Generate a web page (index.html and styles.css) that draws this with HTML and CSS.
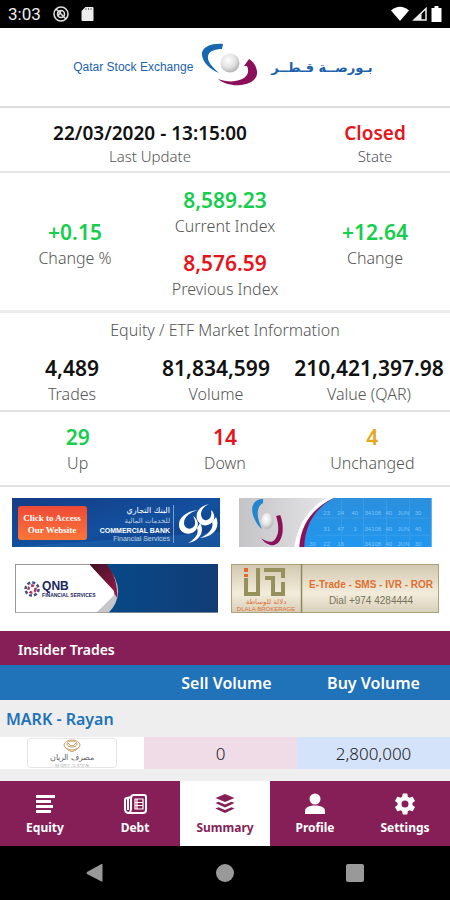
FILE: index.html
```html
<!DOCTYPE html>
<html lang="en">
<head>
    <meta charset="UTF-8">
    <meta name="viewport" content="width=device-width, initial-scale=1.0">
    <title>Qatar Stock Exchange</title>
    <link rel="stylesheet" href="styles.css">
</head>
<body>

<div class="status-bar">
    <span>3:03</span>
    <svg width="16" height="16" viewBox="0 0 16 16" fill="none" stroke="#ddd" stroke-width="1.6">
        <circle cx="8" cy="8" r="7"/>
        <circle cx="8" cy="8" r="3.5"/>
        <path d="M3 3l10 10M5 10l3-5"/>
    </svg>
    <svg width="13" height="16" viewBox="0 0 13 16">
        <path d="M4.500 1H11.500Q12.500 1 12.500 2V14Q12.500 15 11.500 15H1.500Q.5 15 .5 14V5z" fill="#eee"/>
        <path d="M5 2v2M7.500 2v2M10 2v2" stroke="#777"/>
    </svg>
    <div class="status-right">
        <svg width="18" height="16" viewBox="0 0 18 16"><path d="M0 4.500Q9-3 18 4.500L9 15z" fill="#fff"/></svg>
        <svg width="16" height="16" viewBox="0 0 16 16"><path d="M14 2.500V14H2z" fill="none" stroke="#eee" stroke-width="1.500"/><path d="M9.500 7V14H2z" fill="#eee"/></svg>
        <svg width="11" height="16" viewBox="0 0 11 16"><path d="M3.500 0h4v2H10.500V16H.5V2h3z" fill="#fff"/></svg>
    </div>
</div>

<header class="header">
    <span class="brand">Qatar Stock Exchange</span>
    <svg class="logo" width="58" height="44" viewBox="0 0 58 44">
        <defs>
            <radialGradient id="ball" cx="40%" cy="35%" r="65%">
                <stop offset="0" stop-color="#fff"/>
                <stop offset="0.6" stop-color="#e2e2e2"/>
                <stop offset="1" stop-color="#b5b5b5"/>
            </radialGradient>
        </defs>
        <path d="M22 1C9 0 0 5 1 12c1 8 8 14 17 18C11 24 6 18 7 13c1-5 7-7 14-7z" fill="#1767b1"/>
        <path d="M48 16l-5 7h3c4 9-3 14-12 15-5 1-11 0-17-2 6 5 15 7 23 6 11-1 17-7 16-14-1-5-3-9-8-12z" fill="#8b1059"/>
        <circle cx="29" cy="20" r="9.500" fill="url(#ball)"/>
    </svg>
    <span class="brand-ar" lang="ar" dir="rtl">بـورصــة قـطــر</span>
</header>

<main class="content">
    <section class="update">
        <div class="stat small">
            <strong>22/03/2020 - 13:15:00</strong>
            <span>Last Update</span>
        </div>
        <div class="stat small">
            <strong class="red">Closed</strong>
            <span>State</span>
        </div>
    </section>

    <section class="index">
        <div class="stat">
            <strong class="green">+0.15</strong>
            <span>Change %</span>
        </div>
        <div class="index-values">
            <div class="stat">
                <strong class="green">8,589.23</strong>
                <span>Current Index</span>
            </div>
            <div class="stat">
                <strong class="red">8,576.59</strong>
                <span>Previous Index</span>
            </div>
        </div>
        <div class="stat">
            <strong class="green">+12.64</strong>
            <span>Change</span>
        </div>
    </section>

    <section class="market">
        <h2>Equity / ETF Market Information</h2>
        <div class="market-row">
            <div class="stat">
                <strong>4,489</strong>
                <span>Trades</span>
            </div>
            <div class="stat">
                <strong>81,834,599</strong>
                <span>Volume</span>
            </div>
            <div class="stat">
                <strong>210,421,397.98</strong>
                <span>Value (QAR)</span>
            </div>
        </div>
    </section>

    <section class="counts">
        <div class="stat">
            <strong class="green">29</strong>
            <span>Up</span>
        </div>
        <div class="stat">
            <strong class="red">14</strong>
            <span>Down</span>
        </div>
        <div class="stat">
            <strong class="yellow">4</strong>
            <span>Unchanged</span>
        </div>
    </section>

    <section class="banners">
        <!-- Commercial Bank -->
        <a href="#" class="banner wide">
            <svg viewBox="0 0 208 49">
                <defs>
                    <linearGradient id="cb" x2="1" y2="1">
                        <stop offset="0" stop-color="#153c85"/>
                        <stop offset="0.55" stop-color="#12509f"/>
                        <stop offset="1" stop-color="#103a80"/>
                    </linearGradient>
                    <linearGradient id="cta" x2="0" y2="1">
                        <stop offset="0" stop-color="#ee4937"/>
                        <stop offset="1" stop-color="#fb7639"/>
                    </linearGradient>
                </defs>
                <rect width="208" height="49" fill="url(#cb)"/>
                <path d="M0 49L208 34v15z" fill="#2272bd" opacity="0.4"/>
                <rect x="6" y="8" width="69" height="34" rx="3" fill="url(#cta)"/>
                <g class="cta-text" fill="#fff" font-size="9" font-weight="bold" text-anchor="middle">
                    <text x="40" y="23">Click to Access</text>
                    <text x="40" y="35">Our Website</text>
                </g>
                <g fill="#fff" text-anchor="end">
                    <text class="arabic" x="158" y="15" font-size="8">البنك التجاري</text>
                    <text class="arabic" x="158" y="25" font-size="7" opacity="0.7">للخدمات المالية</text>
                    <text x="158" y="35" font-size="7" font-weight="bold">COMMERCIAL BANK</text>
                    <text x="158" y="43" font-size="7" opacity="0.7">Financial Services</text>
                </g>
                <path d="M161.500 7v38" stroke="#7d9fd0"/>
                <path d="M186 12C174 13 166 20 167 28C168 36 178 38 183 33C188 28 186 21 181 18C184 23 184 28 180 30C176 32 172 29 172 25C172 19 178 14 186 12z" fill="#fff"/>
                <path d="M197 6C188 8 183 14 185 21C187 27 193 29 198 26C204 22 203 15 199 12C200 17 199 21 195 22C192 23 189 20 189 16C189 12 192 8 197 6z" fill="#fff"/>
                <path d="M204 19C209 31 200 39 188 40C197 36 202 30 200 24zM188 25C193 33 188 43 176 45C184 41 187 35 185 30z" fill="#fff"/>
            </svg>
        </a>
        <!-- Exchange -->
        <a href="#" class="banner narrow" aria-label="Qatar Stock Exchange">
            <svg viewBox="0 0 192 49">
                <defs>
                    <linearGradient id="sky" x2="0" y2="1">
                        <stop offset="0" stop-color="#2b8fdd"/>
                        <stop offset="1" stop-color="#2197ee"/>
                    </linearGradient>
                    <linearGradient id="silver">
                        <stop offset="0" stop-color="#c4c4c6"/>
                        <stop offset="1" stop-color="#e4e4e6"/>
                    </linearGradient>
                </defs>
                <rect width="192" height="49" fill="url(#sky)"/>
                <path d="M76 20H192M76 37H192M102 0v49M124 0v49M147 0v49M170 0v49" stroke="#4aa8ef" opacity="0.5"/>
                <g fill="#7cc3f7" font-size="6">
                    <text x="84" y="17">23</text><text x="98" y="17">24</text><text x="112" y="17">40</text><text x="125" y="17">34108</text><text x="146" y="17">40</text><text x="158" y="17">JUN</text><text x="175" y="17">30</text>
                    <text x="84" y="33">31</text><text x="98" y="33">47</text><text x="114" y="33">1</text><text x="125" y="33">34108</text><text x="146" y="33">40</text><text x="158" y="33">JUN</text><text x="175" y="33">40</text>
                    <text x="70" y="48">30</text><text x="84" y="48">22</text><text x="98" y="48">16</text><text x="125" y="48">34108</text><text x="146" y="48">40</text><text x="158" y="48">JUN</text><text x="175" y="48">30</text>
                </g>
                <path d="M0 0H94Q66 16 65 49H0z" fill="#8b1059"/>
                <path d="M0 0H94Q62 16 60 49H0z" fill="#fff"/>
                <path d="M0 0H87Q60 16 55 49H0z" fill="url(#silver)"/>
                <path d="M24 1C13 1 11 11 15 20c2 5 5 9 8 11-5-10-7-22 1-26z" fill="#2385cf"/>
                <path d="M37 18l4-1c5 12 3 29-7 30-5 0-9-3-12-7 6 4 11 5 14 1 4-5 4-13 1-23z" fill="#8b1059"/>
                <ellipse cx="28" cy="23" rx="6" ry="8" fill="url(#ball)"/>
            </svg>
        </a>
        <!-- QNB -->
        <a href="#" class="banner mid">
            <svg viewBox="0 0 203 49">
                <defs>
                    <linearGradient id="qnb">
                        <stop offset="0.4" stop-color="#064a89"/>
                        <stop offset="1" stop-color="#123c75"/>
                    </linearGradient>
                    <linearGradient id="wine" x2="1" y2="1">
                        <stop offset="0" stop-color="#3c0f22"/>
                        <stop offset="1" stop-color="#9d1b48"/>
                    </linearGradient>
                </defs>
                <rect width="203" height="49" fill="url(#qnb)"/>
                <path d="M0 0H90Q114 27 93 49H0z" fill="#c6c6cb"/>
                <path d="M74 0H91Q102 12 102 34L97 27z" fill="url(#wine)"/>
                <path d="M.5 .5H74L97 25Q101 29 97 33L81 48.500H.5z" fill="#fff"/>
                <path d="M.5 48.500V.5H74M.5 48.500H203" fill="none" stroke="#999"/>
                <g fill="none" stroke-width="2.500" stroke-dasharray="3 2">
                    <circle cx="17" cy="25" r="6.500" stroke="#44528a"/>
                    <circle cx="17" cy="25" r="3.500" stroke="#b52f59"/>
                </g>
                <text x="27" y="26" font-size="12" font-weight="bold" fill="#20275c">QNB</text>
                <text x="27" y="33" font-size="5" font-weight="bold" fill="#20275c">FINANCIAL SERVICES</text>
            </svg>
        </a>
        <!-- Dlala -->
        <a href="#" class="banner wide">
            <svg viewBox="0 0 208 49">
                <defs>
                    <linearGradient id="sand" x2="0" y2="1">
                        <stop offset="0" stop-color="#d2c8b0"/>
                        <stop offset="0.6" stop-color="#f3ecdb"/>
                        <stop offset="1" stop-color="#d8cfb9"/>
                    </linearGradient>
                </defs>
                <rect x="0.5" y="0.5" width="207" height="48" fill="url(#sand)" stroke="#aaa27d"/>
                <path d="M70.500 0v49" stroke="#8c8a5c" stroke-width="1.500"/>
                <path d="M15 14V30H27V4M33 6H52V14M34 14H42V30H52V18" fill="none" stroke="#96915a" stroke-width="4"/>
                <path d="M13 4h4v4h-4zM13 10h4v3h-4z" fill="#e06c28"/>
                <text class="arabic" x="35" y="40" font-size="7" fill="#dc7135" text-anchor="middle">دلالة للوساطة</text>
                <text x="35" y="47" font-size="6" fill="#dc7135" text-anchor="middle">DLALA BROKERAGE</text>
                <text x="140" y="24" font-size="10" font-weight="bold" fill="#dd7030" text-anchor="middle">E-Trade - SMS - IVR - ROR</text>
                <text x="140" y="40" font-size="10" fill="#77735a" text-anchor="middle">Dial +974 4284444</text>
            </svg>
        </a>
    </section>

    <section class="insider">
        <h3>Insider Trades</h3>
        <table>
            <thead>
                <tr>
                    <th class="col-name"></th>
                    <th class="col-sell">Sell Volume</th>
                    <th>Buy Volume</th>
                </tr>
            </thead>
            <tbody>
                <tr>
                    <th class="company" colspan="3">MARK - Rayan</th>
                </tr>
                <tr>
                    <td class="company-logo">
                        <svg width="90" height="30" viewBox="0 0 90 30">
                            <rect x="0.5" y="0.5" width="89" height="29" rx="3" fill="#fff" stroke="#e5e5e5"/>
                            <g fill="none" stroke="#c9a069">
                                <ellipse cx="45" cy="7" rx="8" ry="5"/>
                                <ellipse cx="45" cy="6" rx="5" ry="3"/>
                                <path d="M38 9q7 9 14 0M41 5q4 6 8 0"/>
                            </g>
                            <text class="arabic" x="45" y="22" font-size="8" fill="#666" text-anchor="middle">مصرف الريان</text>
                            <text x="45" y="29" font-size="4" fill="#777" text-anchor="middle">MASRAF AL RAYAN</text>
                        </svg>
                    </td>
                    <td class="sell">0</td>
                    <td class="buy">2,800,000</td>
                </tr>
            </tbody>
        </table>
    </section>
</main>

<nav class="tabs">
    <a href="#">
        <svg width="24" height="24" viewBox="0 0 24 24"><path d="M3 4.500H22M3 9.500H18M3 14.500H20M3 19.500H18" stroke="#fff" stroke-width="2.800"/></svg>
        Equity
    </a>
    <a href="#">
        <svg width="24" height="24" viewBox="0 0 24 24" fill="none" stroke="#fff">
            <path d="M8 5L4 6Q2 6 2 8V17Q2 21 6 21H20Q23 21 23 18V5Q23 3 21 3H11Q8 3 8 6V17Q8 20 6 21M5 6V18" stroke-width="2"/>
            <path d="M12 7H20V17H12zM12 10.500H20M12 13.500H20M14 7V17" stroke-width="1.200"/>
        </svg>
        Debt
    </a>
    <a href="#" class="active">
        <svg width="24" height="24" viewBox="0 0 24 24" fill="#861f57">
            <path d="M12 2L21.500 6L12 10L2.500 6z"/>
            <path d="M2.500 11L5.500 9.800L12 12.500L18.500 9.800L21.500 11L12 15.500z"/>
            <path d="M2.500 16.500L5.500 15.300L12 18L18.500 15.300L21.500 16.500L12 21z"/>
        </svg>
        Summary
    </a>
    <a href="#">
        <svg width="24" height="24" viewBox="0 0 24 24" fill="#fff">
            <circle cx="12" cy="7" r="5.500"/>
            <path d="M2 22V19C2 15 7 13.500 12 13.500S22 15 22 19V22z"/>
        </svg>
        Profile
    </a>
    <a href="#">
        <svg width="24" height="24" viewBox="0 0 24 24" fill="#fff">
            <path fill-rule="evenodd" d="M19.400 13c.1-.7.100-1.300 0-2l2.300-1.800c.2-.2.300-.5.100-.7l-2-3.500c-.1-.2-.4-.3-.7-.2l-2.600 1c-.5-.4-1.100-.8-1.700-1L14.400 2c0-.3-.2-.5-.5-.5h-3.800c-.3 0-.5.200-.5.500l-.4 2.800c-.6.200-1.200.6-1.700 1l-2.600-1c-.3-.1-.6 0-.7.200l-2 3.500c-.2.200-.1.500.1.700L4.600 11c-.1.700-.1 1.300 0 2l-2.300 1.800c-.2.200-.3.500-.1.700l2 3.500c.1.200.4.300.7.200l2.600-1c.5.400 1.100.8 1.700 1l.4 2.800c0 .3.200.5.500.5h3.800c.3 0 .5-.2.500-.5l.4-2.800c.6-.2 1.200-.6 1.700-1l2.600 1c.3.100.6 0 .7-.2l2-3.500c.2-.2.100-.5-.1-.7zM12 15.500a3.500 3.500 0 1 1 0-7a3.500 3.500 0 0 1 0 7z"/>
        </svg>
        Settings
    </a>
</nav>

<div class="system-bar">
    <button aria-label="Back"><svg width="20" height="20" viewBox="0 0 20 20"><path d="M17.500 2V18Q17.500 19 16.500 18.500L2 11Q1 10 2 9L16.500 1Q17.500 .5 17.500 2z"/></svg></button>
    <button aria-label="Home"><svg width="20" height="20" viewBox="0 0 20 20"><circle cx="10" cy="10" r="9"/></svg></button>
    <button aria-label="Recent apps"><svg width="20" height="20" viewBox="0 0 20 20"><rect x="1" y="1" width="18" height="18" rx="2"/></svg></button>
</div>

</body>
</html>
```
FILE: styles.css
```css
* {
    box-sizing: border-box;
}
body {
    font-family: "Noto Sans", "Open Sans", sans-serif;
    margin: 0;
    height: 100vh;
    display: flex;
    flex-direction: column;
    background-color: #efefef;
}
svg {
    display: block;
}
h2, h3 {
    margin: 0;
}
.status-bar {
    display: flex;
    align-items: center;
    gap: 12px;
    height: 28px;
    padding: 0 8px;
    background: #000;
    color: #eee;
    font: 17px Roboto, sans-serif;
}
.status-right {
    display: flex;
    gap: 3px;
    margin-left: auto;
}
.header {
    display: flex;
    align-items: center;
    justify-content: center;
    height: 80px;
    padding-right: 4px;
    background: #fff;
    border-bottom: 2px solid #dcdcdc;
    color: #1c62ad;
}
.logo {
    margin: 0 12px 4px 8px;
}
.brand {
    font: 12px "Liberation Sans", sans-serif;
}
.brand-ar {
    font: bold 13px "DejaVu Sans", sans-serif;
}
.content {
    flex: 1;
    min-height: 0;
    overflow: hidden;
}
.content section {
    background: #fff;
}
.stat {
    display: flex;
    flex-direction: column;
    align-items: center;
    line-height: 26px;
}
.stat strong {
    font-size: 21px;
    font-weight: 600;
    color: #111;
}
.stat span,
.market h2 {
    font-size: 16px;
    font-weight: 300;
    color: #555;
}
.stat.small {
    line-height: 23px;
}
.stat.small strong {
    font-size: 19px;
}
.stat.small span {
    font-size: 15px;
}
.stat .green {
    color: #16cd4c;
}
.stat .red {
    color: #e5151c;
}
.stat .yellow {
    color: #e3a81c;
}
.update {
    display: grid;
    grid-template-columns: 2fr 1fr;
    padding: 14px 0 3px;
    border-bottom: 2px solid #e6e6e6;
}
.index {
    display: grid;
    grid-template-columns: 1fr 1fr 1fr;
    align-items: center;
    padding: 14px 0 8px;
    border-bottom: 3px solid #ececec;
}
.index-values {
    display: grid;
    gap: 11px;
}
.market {
    padding: 4px 0 3px;
    border-bottom: 2px solid #e2e2e2;
}
.market h2 {
    text-align: center;
    line-height: 26px;
    margin-bottom: 12px;
}
.market-row {
    display: grid;
    grid-template-columns: 8fr 8fr 9fr;
}
.counts {
    display: grid;
    grid-template-columns: 1fr 1fr 1fr;
    padding: 12px 4px 9px;
    border-bottom: 2px solid #e2e2e2;
}
.banners {
    display: grid;
    grid-template-columns: 1fr 1fr;
    justify-items: center;
    gap: 17px 0;
    padding: 11px 5px 18px 7px;
}
.banner {
    font-family: "Liberation Sans", sans-serif;
}
.banner.wide {
    width: 95%;
}
.banner.mid {
    width: 93%;
}
.banner.narrow {
    width: 88%;
}
.banner svg {
    width: 100%;
}
.arabic {
    font-family: "DejaVu Sans", sans-serif;
}
.cta-text {
    font-family: "Liberation Serif", serif;
}
.insider h3 {
    padding: 4px 18px 0;
    height: 34px;
    line-height: 30px;
    background: #861f57;
    color: #fff;
    font-size: 14px;
    font-weight: 600;
}
.insider table {
    width: 100%;
    border-collapse: collapse;
    table-layout: fixed;
}
.insider th,
.insider td {
    padding: 0;
    text-align: center;
    font-size: 16px;
}
.insider thead th {
    height: 35px;
    background: #2072b9;
    color: #fff;
    font-weight: 600;
}
.insider .col-name {
    width: 32%;
}
.insider .col-sell {
    width: 34%;
    padding-left: 12px;
}
.insider .company {
    height: 37px;
    padding-left: 6px;
    background: #eee;
    color: #2072b9;
    font-weight: 600;
    text-align: left;
}
.insider td {
    height: 32px;
    color: #222;
    font-size: 17px;
    font-weight: 300;
}
.company-logo svg {
    margin: 0 auto;
}
.insider .sell {
    background: #f0dce7;
}
.insider .buy {
    background: #d5e3fa;
}
.tabs {
    display: grid;
    grid-template-columns: repeat(5, 1fr);
    background: #861f57;
}
.tabs a {
    display: flex;
    flex-direction: column;
    align-items: center;
    gap: 2px;
    padding: 11px 0 8px;
    color: #fff;
    font-size: 12px;
    line-height: 20px;
    font-weight: 700;
    text-decoration: none;
}
.tabs .active {
    background: #fff;
    color: #861f57;
}
.system-bar {
    display: flex;
    justify-content: space-around;
    align-items: center;
    height: 54px;
    padding: 0 30px;
    background: #000;
}
.system-bar button {
    padding: 0;
    background: none;
    border: none;
    cursor: pointer;
}
.system-bar svg {
    fill: #999;
}
```
